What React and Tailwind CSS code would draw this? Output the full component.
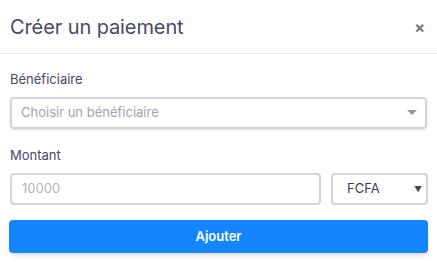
import React from 'react';

function App() {
    return (
        <div className="w-[437px] h-[262px] bg-white font-['Inter',sans-serif] text-[#4a4866]">
            <div className="flex items-center justify-between h-[54px] pl-[10px] pr-[12px] border-b border-[#e5e5e5]">
                <h1 className="text-[20px] leading-none tracking-[-0.1px]">Créer un paiement</h1>
                <span className="text-[#777] text-[16px] font-bold leading-none">×</span>
            </div>
            <div className="px-[10px] pt-[17px]">
                <label className="block text-[13px] leading-[16px] mb-[10px]">Bénéficiaire</label>
                <div className="flex items-center justify-between h-[32px] pl-[9px] pr-[8px] border-2 border-[#d3d5da] rounded-[4px] shadow-sm">
                    <span className="text-[13px] text-[#a3a3ad]">Choisir un bénéficiaire</span>
                    <svg width="10" height="6" viewBox="0 0 10 6">
                        <path d="M0 0 L10 0 L5 5 Z" fill="#999" />
                    </svg>
                </div>
                <label className="block text-[13px] leading-[16px] mt-[18px] mb-[10px]">Montant</label>
                <div className="flex gap-[10px]">
                    <div className="flex items-center flex-1 h-[32px] px-[10px] border-2 border-[#d3d5da] rounded-[4px]">
                        <span className="text-[13px] text-[#b5b5bd]">10000</span>
                    </div>
                    <div className="flex items-center justify-between w-[97px] -mr-[1px] h-[32px] pl-[14px] pr-[4px] border-2 border-[#d3d5da] rounded-[4px]">
                        <span className="text-[13px] text-[#3a3a55]">FCFA</span>
                        <span className="text-[8px] text-[#444]">▼</span>
                    </div>
                </div>
                <button className="w-[calc(100%+2px)] -ml-[1px] h-[33px] mt-[15px] bg-[#1485fd] text-white text-[13px] font-semibold rounded-[4px] shadow-md">
                    Ajouter
                </button>
            </div>
        </div>
    );
}

export default App;
